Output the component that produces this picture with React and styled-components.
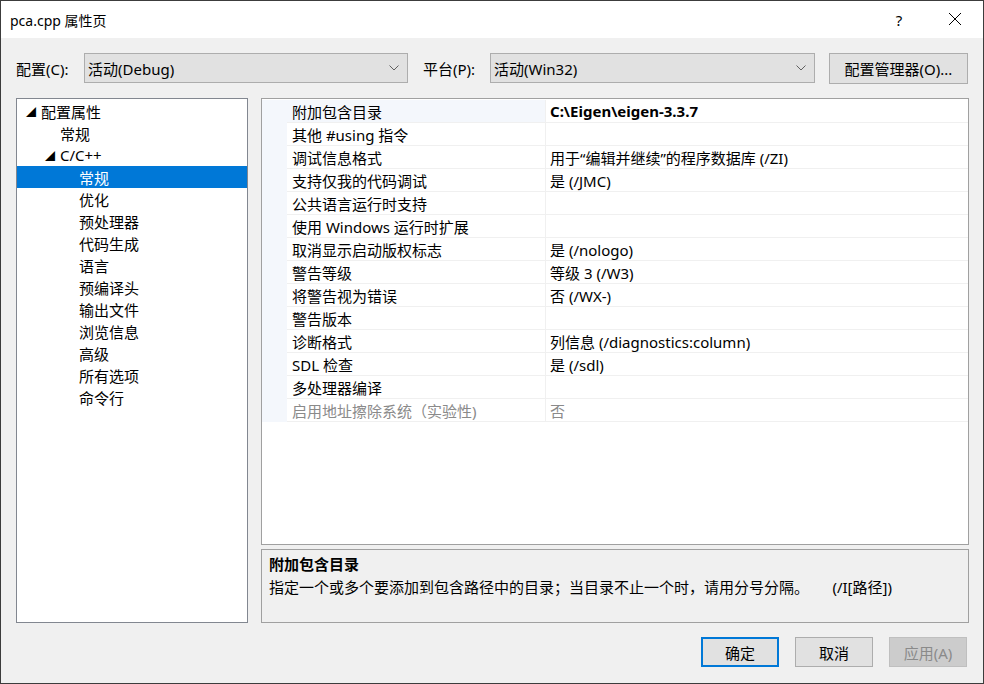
import React from 'react'
import styled, { createGlobalStyle } from 'styled-components'

const Global = createGlobalStyle`
html, body { margin: 0; padding: 0; }
body {
  font-family: "Noto Sans", "Noto Sans CJK SC", sans-serif;
  font-size: 15px;
  color: #000;
}
`

const Win = styled.div`
width: 984px;
height: 684px;
box-sizing: border-box;
border: 1px solid #3c3c3c;
background: #f0f0f0;
display: flex;
flex-direction: column;
`

const TitleBar = styled.div`
height: 37px;
background: #fff;
display: flex;
align-items: center;
padding-left: 9px;
font-size: 14px;
`

const TitleText = styled.div`
flex: 1;
`

const TitleBtn = styled.div`
width: 56px;
text-align: center;
font-size: 15px;
`

const Body = styled.div`
flex: 1;
display: flex;
flex-direction: column;
padding: 14px 15px 0 15px;
`

const ConfigRow = styled.div`
display: flex;
align-items: center;
height: 32px;
`

const Label = styled.span`
flex-shrink: 0;
box-sizing: border-box;
width: ${p => p.w}px;
padding-left: ${p => p.pl || 0}px;
`

const Combo = styled.div`
flex-shrink: 0;
width: ${p => p.w}px;
height: 30px;
box-sizing: border-box;
border: 1px solid #adadad;
background: #e1e1e1;
display: flex;
align-items: center;
padding: 0 8px 0 3px;
`

const ComboText = styled.span`
flex: 1;
`

const Btn = styled.div`
flex-shrink: 0;
width: ${p => p.w || 78}px;
height: ${p => p.h || 30}px;
box-sizing: border-box;
border: ${p => p.primary ? '2px' : '1px'} solid;
background: ${p => p.disabled ? '#cccccc' : '#e1e1e1'};
color: ${p => p.disabled ? '#8a8a8a' : '#000'};
border-color: ${p => p.disabled ? '#bfbfbf' : p.primary ? '#0078d7' : '#adadad'};
display: flex;
align-items: center;
justify-content: center;
margin-left: ${p => p.ml || 0}px;
`

const Main = styled.div`
display: flex;
margin-top: 14px;
height: 525px;
`

const Tree = styled.div`
width: 232px;
flex-shrink: 0;
box-sizing: border-box;
border: 1px solid #828790;
background: #fff;
padding-top: 1px;
`

const TreeItem = styled.div`
height: 22px;
display: flex;
align-items: center;
padding-left: ${p => 9 + p.level * 19}px;
background: ${p => p.selected ? '#0078d7' : 'transparent'};
color: ${p => p.selected ? '#fff' : '#000'};
`

const Arrow = styled.span`
width: 15px;
flex-shrink: 0;
font-size: 10px;
`

const Right = styled.div`
flex: 1;
margin-left: 13px;
margin-right: -1px;
display: flex;
flex-direction: column;
`

const Grid = styled.div`
height: 448px;
box-sizing: border-box;
border: 1px solid #a0a0a0;
background: #fff;
padding-top: 1px;
`

const PropRow = styled.div`
display: flex;
height: 23px;
`

const Margin = styled.div`
width: 25px;
background: #f4f7fc;
`

const NameCell = styled.div`
width: 253px;
padding-left: 5px;
display: flex;
align-items: center;
border-bottom: 1px solid #f0f0f0;
border-right: 1px solid #f0f0f0;
background: ${p => p.sel ? '#f4f7fc' : '#fff'};
color: ${p => p.dim ? '#8a8a8a' : '#000'};
`

const ValueCell = styled.div`
flex: 1;
padding-left: 4px;
display: flex;
align-items: center;
border-bottom: 1px solid #f0f0f0;
font-weight: ${p => p.bold ? 700 : 400};
color: ${p => p.dim ? '#8a8a8a' : '#000'};
`

const Desc = styled.div`
margin-top: 4px;
height: 74px;
box-sizing: border-box;
border: 1px solid #a0a0a0;
padding: 3px 7px;
`

const DescTitle = styled.div`
font-weight: 700;
line-height: 22px;
`

const DescText = styled.div`
line-height: 24px;
`

const Footer = styled.div`
display: flex;
justify-content: flex-end;
padding-top: 14px;
padding-right: 1px;
`

const Chevron = () => (
  <svg width="10" height="6" viewBox="0 0 10 6">
    <path d="M0.5 0.5 L5 5 L9.5 0.5" fill="none" stroke="#606060" strokeWidth="1" />
  </svg>
)

const tree = [
  { t: '配置属性', level: 0, open: true },
  { t: '常规', level: 1 },
  { t: 'C/C++', level: 1, open: true },
  { t: '常规', level: 2, selected: true },
  { t: '优化', level: 2 },
  { t: '预处理器', level: 2 },
  { t: '代码生成', level: 2 },
  { t: '语言', level: 2 },
  { t: '预编译头', level: 2 },
  { t: '输出文件', level: 2 },
  { t: '浏览信息', level: 2 },
  { t: '高级', level: 2 },
  { t: '所有选项', level: 2 },
  { t: '命令行', level: 2 },
]

const props = [
  ['附加包含目录', 'C:\\Eigen\\eigen-3.3.7'],
  ['其他 #using 指令', ''],
  ['调试信息格式', '用于“编辑并继续”的程序数据库 (/ZI)'],
  ['支持仅我的代码调试', '是 (/JMC)'],
  ['公共语言运行时支持', ''],
  ['使用 Windows 运行时扩展', ''],
  ['取消显示启动版权标志', '是 (/nologo)'],
  ['警告等级', '等级 3 (/W3)'],
  ['将警告视为错误', '否 (/WX-)'],
  ['警告版本', ''],
  ['诊断格式', '列信息 (/diagnostics:column)'],
  ['SDL 检查', '是 (/sdl)'],
  ['多处理器编译', ''],
  ['启用地址擦除系统（实验性)', '否'],
]

const App = () => (
  <Win>
    <Global />
    <TitleBar>
      <TitleText>pca.cpp 属性页</TitleText>
      <TitleBtn>?</TitleBtn>
      <TitleBtn>
        <svg width="14" height="14" viewBox="0 0 14 14">
          <path d="M1 1 L13 13 M13 1 L1 13" stroke="#000" strokeWidth="1" />
        </svg>
      </TitleBtn>
    </TitleBar>
    <Body>
      <ConfigRow>
        <Label w={68}>配置(C):</Label>
        <Combo w={324}><ComboText>活动(Debug)</ComboText><Chevron /></Combo>
        <Label w={82} pl={15}>平台(P):</Label>
        <Combo w={325}><ComboText>活动(Win32)</ComboText><Chevron /></Combo>
        <Btn w={139} h={31} ml={14}>配置管理器(O)...</Btn>
      </ConfigRow>
      <Main>
        <Tree>
          {tree.map((it, i) => (
            <TreeItem key={i} level={it.level} selected={it.selected}>
              <Arrow>{it.open ? '◢' : ''}</Arrow>
              {it.t}
            </TreeItem>
          ))}
        </Tree>
        <Right>
          <Grid>
            {props.map(([n, v], i) => (
              <PropRow key={i}>
                <Margin />
                <NameCell sel={i === 0} dim={i === 13}>{n}</NameCell>
                <ValueCell bold={i === 0} dim={i === 13}>{v}</ValueCell>
              </PropRow>
            ))}
          </Grid>
          <Desc>
            <DescTitle>附加包含目录</DescTitle>
            <DescText>指定一个或多个要添加到包含路径中的目录；当目录不止一个时，请用分号分隔。&nbsp;&nbsp;&nbsp;&nbsp;&nbsp;&nbsp;(/I[路径])</DescText>
          </Desc>
        </Right>
      </Main>
      <Footer>
        <Btn primary>确定</Btn>
        <Btn ml={16}>取消</Btn>
        <Btn ml={16} disabled>应用(A)</Btn>
      </Footer>
    </Body>
  </Win>
)

export default App
